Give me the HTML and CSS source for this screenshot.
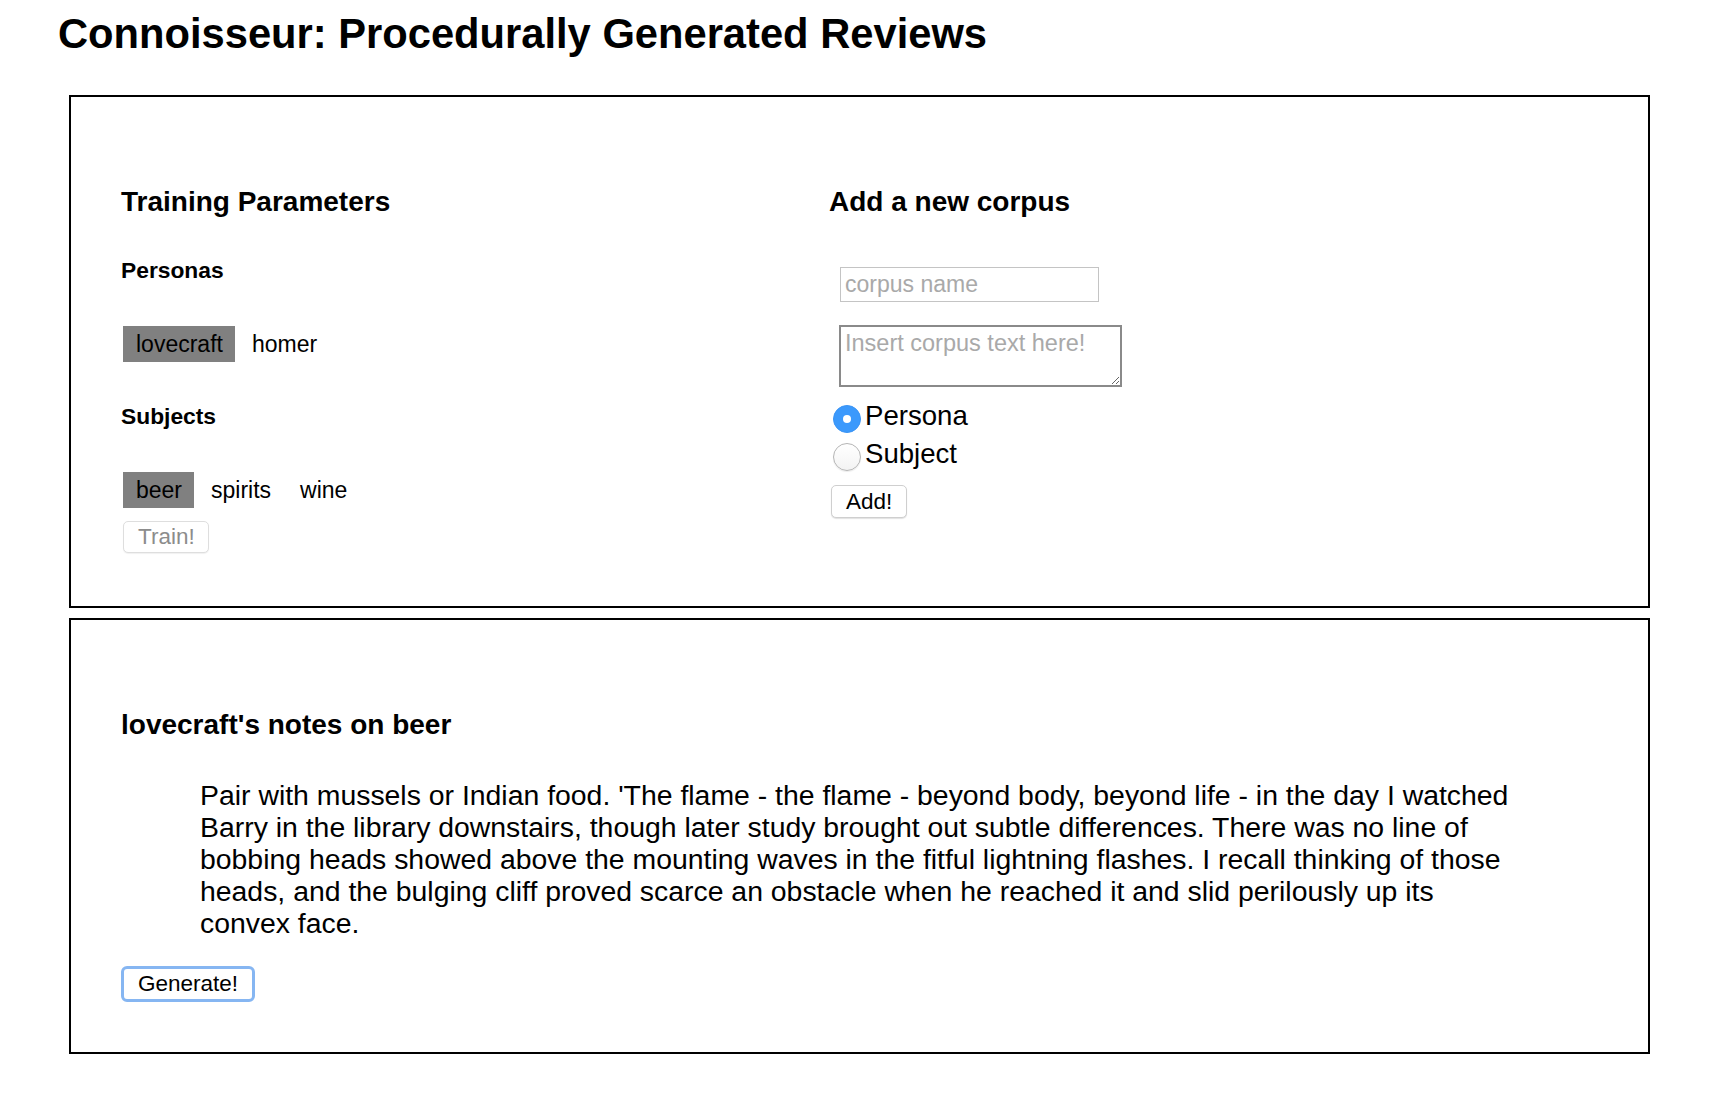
FILE: index.html
```html
<!DOCTYPE html>
<html lang="en">
<head>
<meta charset="utf-8">
<title>Connoisseur</title>
<link rel="stylesheet" href="styles.css">
</head>
<body>
<div class="page">
  <h1 class="title">Connoisseur: Procedurally Generated Reviews</h1>

  <section class="panel panel-train">
    <div class="cols">
      <div class="col col-left">
        <h2 class="heading">Training Parameters</h2>
        <h3 class="subheading">Personas</h3>
        <div class="chips">
          <span class="chip chip-on">lovecraft</span>
          <span class="chip">homer</span>
        </div>
        <h3 class="subheading subheading-2">Subjects</h3>
        <div class="chips">
          <span class="chip chip-on">beer</span>
          <span class="chip">spirits</span>
          <span class="chip">wine</span>
        </div>
        <button class="btn btn-train" disabled>Train!</button>
      </div>
      <div class="col col-right">
        <h2 class="heading">Add a new corpus</h2>
        <input class="field" type="text" placeholder="corpus name">
        <textarea class="area" placeholder="Insert corpus text here!"></textarea>
        <label class="radio-row radio-first"><input class="radio" type="radio" name="kind" checked><span class="radio-label">Persona</span></label>
        <label class="radio-row"><input class="radio" type="radio" name="kind"><span class="radio-label">Subject</span></label>
        <button class="btn btn-add">Add!</button>
      </div>
    </div>
  </section>

  <section class="panel panel-review">
    <h2 class="heading">lovecraft's notes on beer</h2>
    <p class="review">Pair with mussels or Indian food. 'The flame - the flame - beyond body, beyond life - in the day I watched Barry in the library downstairs, though later study brought out subtle differences. There was no line of bobbing heads showed above the mounting waves in the fitful lightning flashes. I recall thinking of those heads, and the bulging cliff proved scarce an obstacle when he reached it and slid perilously up its convex face.</p>
    <button class="btn btn-generate">Generate!</button>
  </section>
</div>
</body>
</html>
```

FILE: styles.css
```css
html, body {
  margin: 0;
  padding: 0;
  background: #ffffff;
}

body {
  font-family: "Liberation Sans", Arial, Helvetica, sans-serif;
  color: #000000;
}

.page {
  padding-top: 10px;
  padding-bottom: 40px;
}

.title {
  margin: 0 0 0 58px;
  font-size: 41.7px;
  line-height: 47px;
  font-weight: bold;
}

.panel {
  box-sizing: border-box;
  width: 1581px;
  margin-left: 69px;
  border: 2px solid #000000;
  padding-left: 50px;
  padding-right: 50px;
}

.panel-train {
  margin-top: 38px;
  padding-top: 89px;
  padding-bottom: 53px;
}

.panel-review {
  margin-top: 10px;
  padding-top: 89px;
  padding-bottom: 50px;
}

.cols {
  display: grid;
  grid-template-columns: 708px 1fr;
}

.col {
  display: flex;
  flex-direction: column;
  align-items: flex-start;
}

.heading {
  margin: 0;
  font-size: 28px;
  line-height: 32px;
  font-weight: bold;
}

.subheading {
  margin: 39px 0 0 0;
  font-size: 22.8px;
  line-height: 26px;
  font-weight: bold;
}

.subheading-2 {
  margin-top: 41px;
}

.chips {
  display: flex;
  gap: 4px;
  margin-top: 43px;
  margin-left: 2px;
}

.chip {
  display: block;
  padding: 5px 12px 5px 13px;
  font-size: 23px;
  line-height: 26px;
}

.chip-on {
  background: #808080;
}

.btn {
  box-sizing: border-box;
  font-family: "Liberation Sans", Arial, Helvetica, sans-serif;
  font-size: 22.5px;
  line-height: 26px;
  background: #ffffff;
  color: #000000;
  border: 1px solid #cfcfcf;
  border-radius: 5px;
  box-shadow: 0 1px 1px rgba(0, 0, 0, 0.12);
  padding: 0 14px;
  cursor: default;
}

.btn-train {
  margin-top: 13px;
  margin-left: 2px;
  height: 32px;
  width: 86px;
  color: #8c8c8c;
  border-color: #dedede;
  box-shadow: 0 1px 1px rgba(0, 0, 0, 0.06);
}

.field {
  box-sizing: border-box;
  margin-top: 49px;
  margin-left: 11px;
  width: 259px;
  height: 35px;
  padding: 0 4px;
  border: 1px solid #c4c4c4;
  border-radius: 0;
  font-family: "Liberation Sans", Arial, Helvetica, sans-serif;
  font-size: 23px;
  outline: none;
}

.field::placeholder,
.area::placeholder {
  color: #a9a9a9;
  opacity: 1;
}

.area {
  box-sizing: border-box;
  margin-top: 23px;
  margin-left: 10px;
  width: 283px;
  height: 62px;
  padding: 3px 4px;
  border: 2px solid #8a8a8a;
  border-radius: 0;
  font-family: "Liberation Sans", Arial, Helvetica, sans-serif;
  font-size: 23.5px;
  line-height: 26px;
  outline: none;
}

.radio-row {
  display: flex;
  align-items: flex-start;
  height: 38px;
  margin-left: 4px;
}

.radio-first {
  margin-top: 13px;
}

.radio {
  -webkit-appearance: none;
  appearance: none;
  box-sizing: border-box;
  width: 28px;
  height: 28px;
  margin: 5px 4px 0 0;
  border-radius: 50%;
  border: 1px solid #b5b5b5;
  background: linear-gradient(#ffffff, #f3f3f3);
  box-shadow: 0 1px 1px rgba(0, 0, 0, 0.08);
  position: relative;
  flex: none;
}

.radio:checked {
  border-color: #3a94f5;
  background: #3b99fc;
  box-shadow: none;
}

.radio:checked::after {
  content: "";
  position: absolute;
  left: 50%;
  top: 50%;
  width: 8px;
  height: 8px;
  margin: -4px 0 0 -4px;
  border-radius: 50%;
  background: #ffffff;
}

.radio-label {
  font-size: 27.6px;
  line-height: 32px;
}

.btn-add {
  margin-top: 9px;
  margin-left: 2px;
  height: 33px;
  width: 76px;
}

.review {
  margin: 38px 78px 0 79px;
  font-size: 28.4px;
  line-height: 32px;
}

.btn-generate {
  margin-top: 27px;
  height: 36px;
  width: 134px;
  border: 3px solid #86b6f2;
  border-radius: 6px;
  box-shadow: none;
  padding: 0 10px;
}
```
